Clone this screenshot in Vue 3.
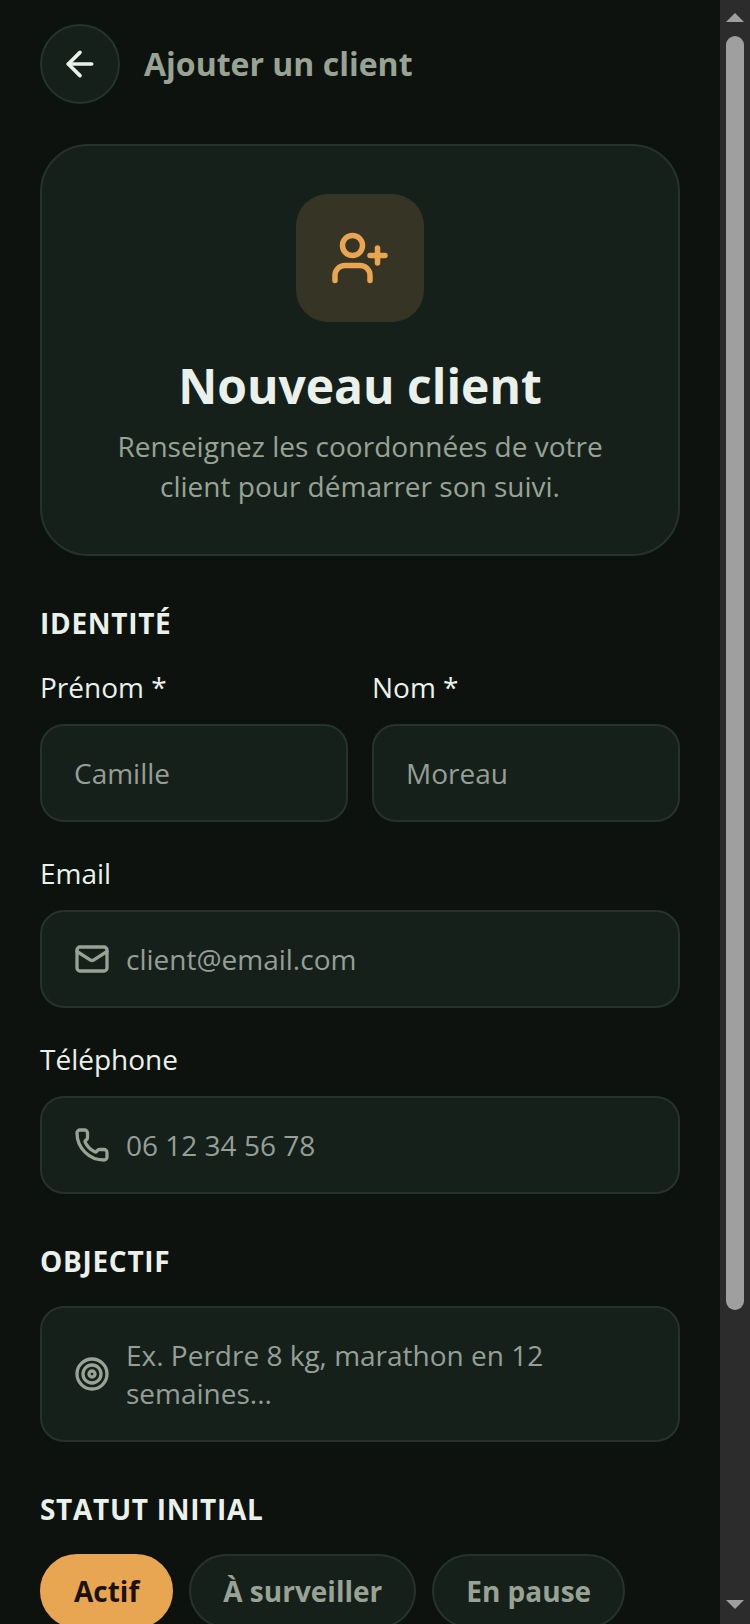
<template>
  <div class="screen">
    <main class="page">
      <header class="topbar">
        <button type="button" class="back" aria-label="Retour">
          <svg class="icon-back" viewBox="0 0 24 24">
            <path d="m12 19-7-7 7-7" />
            <path d="M19 12H5" />
          </svg>
        </button>
        <span class="topbar-title">Ajouter un client</span>
      </header>

      <section class="hero">
        <div class="hero-icon">
          <svg viewBox="0 0 24 24">
            <path d="M16 21v-2a4 4 0 0 0-4-4H6a4 4 0 0 0-4 4v2" />
            <circle cx="9" cy="7" r="4" />
            <path d="M19 8v6" />
            <path d="M22 11h-6" />
          </svg>
        </div>
        <h1>Nouveau client</h1>
        <p>Renseignez les coordonnées de votre client pour démarrer son suivi.</p>
      </section>

      <form @submit.prevent>
        <section class="group">
          <h2>Identité</h2>
          <div class="fields">
            <div class="row">
              <div class="field">
                <label for="firstName">Prénom *</label>
                <div class="control">
                  <input id="firstName" v-model="form.firstName" type="text" placeholder="Camille" />
                </div>
              </div>
              <div class="field">
                <label for="lastName">Nom *</label>
                <div class="control">
                  <input id="lastName" v-model="form.lastName" type="text" placeholder="Moreau" />
                </div>
              </div>
            </div>
            <div class="field">
              <label for="email">Email</label>
              <div class="control">
                <svg viewBox="0 0 24 24">
                  <path d="m22 7-8.991 5.727a2 2 0 0 1-2.009 0L2 7" />
                  <rect x="2" y="4" width="20" height="16" rx="2" />
                </svg>
                <input id="email" v-model="form.email" type="email" placeholder="client@email.com" />
              </div>
            </div>
            <div class="field">
              <label for="phone">Téléphone</label>
              <div class="control">
                <svg viewBox="0 0 24 24">
                  <path d="M13.832 16.568a1 1 0 0 0 1.213-.303l.355-.465A2 2 0 0 1 17 15h3a2 2 0 0 1 2 2v3a2 2 0 0 1-2 2A18 18 0 0 1 2 4a2 2 0 0 1 2-2h3a2 2 0 0 1 2 2v3a2 2 0 0 1-.8 1.6l-.468.351a1 1 0 0 0-.292 1.233 14 14 0 0 0 6.392 6.384" />
                </svg>
                <input id="phone" v-model="form.phone" type="tel" placeholder="06 12 34 56 78" />
              </div>
            </div>
          </div>
        </section>

        <section class="group">
          <h2 id="goalTitle">Objectif</h2>
          <div class="control">
            <svg viewBox="0 0 24 24">
              <circle cx="12" cy="12" r="10" />
              <circle cx="12" cy="12" r="6" />
              <circle cx="12" cy="12" r="2" />
            </svg>
            <textarea
              v-model="form.goal"
              rows="2"
              aria-labelledby="goalTitle"
              placeholder="Ex. Perdre 8 kg, marathon en 12 semaines..."
            ></textarea>
          </div>
        </section>

        <section class="group">
          <h2>Statut initial</h2>
          <div class="chips">
            <button
              v-for="status in statuses"
              :key="status"
              type="button"
              class="chip"
              :class="{ active: form.status === status }"
              :aria-pressed="form.status === status"
              @click="form.status = status"
            >
              {{ status }}
            </button>
          </div>
        </section>
      </form>
    </main>

    <div class="scrollbar" aria-hidden="true">
      <svg class="arrow" viewBox="0 0 18 9"><path d="M9 0l9 9H0z" /></svg>
      <div class="track">
        <div class="thumb"></div>
      </div>
      <svg class="arrow" viewBox="0 0 18 9"><path d="M0 0h18L9 9z" /></svg>
    </div>
  </div>
</template>

<script setup>
import { reactive } from 'vue';

const statuses = ['Actif', 'À surveiller', 'En pause'];

const form = reactive({
  firstName: '',
  lastName: '',
  email: '',
  phone: '',
  goal: '',
  status: 'Actif'
});
</script>

<style>
body {
  margin: 0;
  background: #0d120e;
}
</style>

<style scoped>
.screen {
  display: flex;
  height: 100vh;
  background: #0d120e;
  color: #eaf1eb;
  font-family: "Open Sans", "Noto Sans", sans-serif;
  font-size: 28px;
  line-height: 38px;
}

.page {
  flex: 1;
  min-width: 0;
  box-sizing: border-box;
  padding: 24px 40px;
  overflow-y: auto;
  scrollbar-width: none;
}

svg {
  flex: none;
  fill: none;
  stroke: currentColor;
  stroke-width: 2.2;
  stroke-linecap: round;
  stroke-linejoin: round;
}

.topbar {
  display: flex;
  align-items: center;
  gap: 24px;
  margin-bottom: 40px;
}

.back {
  display: flex;
  align-items: center;
  justify-content: center;
  width: 80px;
  height: 80px;
  padding: 0;
  border: 2px solid #28322d;
  border-radius: 50%;
  background: #16201b;
  color: #eaf1eb;
  box-sizing: border-box;
  cursor: pointer;
}

.icon-back {
  width: 40px;
  height: 40px;
}

.topbar-title {
  color: #98a394;
  font-size: 32px;
  font-weight: 700;
}

.hero {
  display: flex;
  flex-direction: column;
  align-items: center;
  padding: 48px;
  border: 2px solid #28322d;
  border-radius: 48px;
  background: #16201b;
  text-align: center;
}

.hero-icon {
  display: flex;
  align-items: center;
  justify-content: center;
  width: 128px;
  height: 128px;
  margin-bottom: 32px;
  border-radius: 32px;
  background: #363424;
  color: #e8a552;
}

.hero-icon svg {
  width: 60px;
  height: 60px;
}

h1 {
  margin: 0 0 8px;
  font-size: 48px;
  font-weight: 700;
  line-height: 64px;
}

.hero p {
  margin: 0;
  color: #98a394;
  line-height: 40px;
}

.group {
  margin-top: 48px;
}

h2 {
  margin: 0 0 26px;
  font-size: 28px;
  font-weight: 700;
  letter-spacing: 0.025em;
  text-transform: uppercase;
}

.fields {
  display: flex;
  flex-direction: column;
  gap: 32px;
}

.row {
  display: grid;
  grid-template-columns: 1fr 1fr;
  gap: 24px;
}

.field {
  display: flex;
  flex-direction: column;
  gap: 18px;
  min-width: 0;
}

.control {
  display: flex;
  align-items: center;
  gap: 16px;
  padding: 28px 32px;
  border: 2px solid #28322d;
  border-radius: 24px;
  background: #16201b;
  color: #98a394;
}

.control svg {
  width: 36px;
  height: 36px;
}

input,
textarea {
  display: block;
  flex: 1;
  min-width: 0;
  height: 38px;
  padding: 0;
  border: none;
  outline: none;
  background: transparent;
  color: #eaf1eb;
  font: inherit;
  line-height: 38px;
}

textarea {
  height: 76px;
  resize: none;
  overflow: hidden;
}

input::placeholder,
textarea::placeholder {
  color: #959e97;
  opacity: 1;
}

.chips {
  display: flex;
  flex-wrap: wrap;
  gap: 16px;
}

.chip {
  padding: 16px 32px;
  border: 2px solid #28322d;
  border-radius: 40px;
  background: #16201b;
  color: #98a394;
  font: inherit;
  font-weight: 700;
  line-height: 38px;
  cursor: pointer;
}

.chip.active {
  border-color: #e8a552;
  background: #e8a552;
  color: #1c1207;
}

.scrollbar {
  display: flex;
  flex-direction: column;
  align-items: center;
  justify-content: space-between;
  gap: 14px;
  width: 30px;
  padding: 13px 0 15px;
  box-sizing: border-box;
  background: #2c2c2c;
}

.arrow {
  width: 18px;
  height: 9px;
  fill: #9f9f9f;
  stroke: none;
}

.track {
  flex: 1;
  width: 18px;
}

.thumb {
  height: 82.2%;
  border-radius: 9px;
  background: #9f9f9f;
}
</style>
